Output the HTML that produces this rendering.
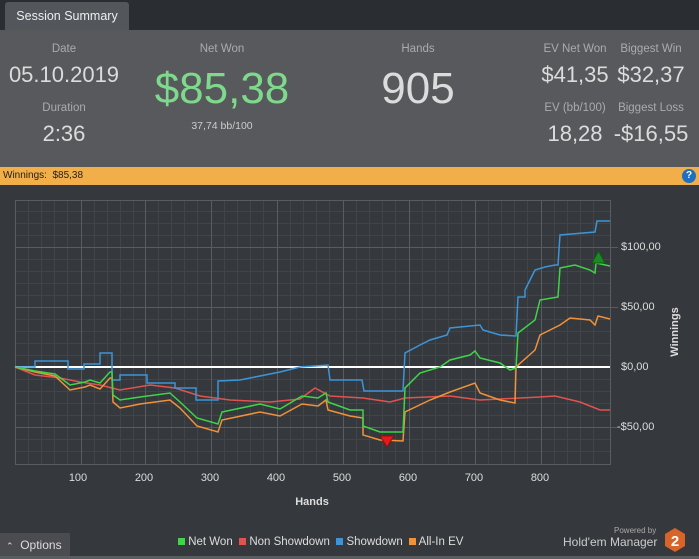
<!DOCTYPE html>
<html><head><meta charset="utf-8"><style>
*{margin:0;padding:0;box-sizing:border-box}
body{width:699px;height:559px;background:#35383c;font-family:"Liberation Sans",sans-serif;position:relative;overflow:hidden}
.t{position:absolute;text-align:center;color:#a9abad;white-space:nowrap}
.v{position:absolute;text-align:center;color:#dcdcdc;white-space:nowrap}
</style></head><body>
<div style="position:absolute;left:0;top:0;width:699px;height:30px;background:#2a2d31"></div>
<div style="position:absolute;left:5px;top:2px;width:124px;height:28px;background:#53575b;border-radius:3px 3px 0 0;color:#eee;font-size:12.5px;line-height:28px;text-align:center">Session Summary</div>
<div style="position:absolute;left:0;top:30px;width:699px;height:137px;background:#57595c"></div>
<div class="t" style="left:14px;width:100px;top:43px;font-size:11.5px">Date</div>
<div class="v" style="left:0;width:128px;top:62px;font-size:22px">05.10.2019</div>
<div class="t" style="left:14px;width:100px;top:102px;font-size:11.5px">Duration</div>
<div class="v" style="left:14px;width:100px;top:121px;font-size:22px">2:36</div>
<div class="t" style="left:172px;width:100px;top:43px;font-size:11.5px">Net Won</div>
<div class="v" style="left:122px;width:200px;top:64px;font-size:44px;color:#7fd98c">$85,38</div>
<div class="v" style="left:172px;width:100px;top:120px;font-size:10.5px;color:#ccc">37,74 bb/100</div>
<div class="t" style="left:368px;width:100px;top:43px;font-size:11.5px">Hands</div>
<div class="v" style="left:318px;width:200px;top:64px;font-size:44px">905</div>
<div class="t" style="left:525px;width:100px;top:43px;font-size:11.5px">EV Net Won</div>
<div class="v" style="left:525px;width:100px;top:62px;font-size:22px">$41,35</div>
<div class="t" style="left:601px;width:100px;top:43px;font-size:11.5px">Biggest Win</div>
<div class="v" style="left:601px;width:100px;top:62px;font-size:22px">$32,37</div>
<div class="t" style="left:525px;width:100px;top:102px;font-size:11.5px">EV (bb/100)</div>
<div class="v" style="left:525px;width:100px;top:121px;font-size:22px">18,28</div>
<div class="t" style="left:601px;width:100px;top:102px;font-size:11.5px">Biggest Loss</div>
<div class="v" style="left:601px;width:100px;top:121px;font-size:22px">-$16,55</div>
<div style="position:absolute;left:0;top:167px;width:699px;height:18px;background:#f2ae48;font-size:10px;line-height:18px;padding-left:3px;color:#222">Winnings:&nbsp; $85,38</div>
<div style="position:absolute;left:682px;top:169px;width:14px;height:14px;border-radius:50%;background:#1e6fc0;color:#fff;font-size:10px;font-weight:bold;text-align:center;line-height:14px">?</div>
<svg style="position:absolute;left:0;top:0" width="699" height="559">
<g stroke="#41454a" stroke-width="1">
<path d="M28.5 200V464M41.5 200V464M54.5 200V464M67.5 200V464M94.5 200V464M107.5 200V464M120.5 200V464M133.5 200V464M158.5 200V464M171.5 200V464M184.5 200V464M197.5 200V464M224.5 200V464M237.5 200V464M250.5 200V464M263.5 200V464M290.5 200V464M303.5 200V464M316.5 200V464M329.5 200V464M356.5 200V464M369.5 200V464M382.5 200V464M395.5 200V464M422.5 200V464M435.5 200V464M448.5 200V464M461.5 200V464M488.5 200V464M501.5 200V464M514.5 200V464M527.5 200V464M554.5 200V464M567.5 200V464M580.5 200V464M593.5 200V464"/>
<path d="M15 211.5H610M15 223.5H610M15 235.5H610M15 259.5H610M15 271.5H610M15 283.5H610M15 295.5H610M15 319.5H610M15 331.5H610M15 343.5H610M15 355.5H610M15 379.5H610M15 391.5H610M15 403.5H610M15 415.5H610M15 439.5H610M15 451.5H610"/>
</g>
<g stroke="#595d61" stroke-width="1" fill="none">
<rect x="15.5" y="200.5" width="595" height="264"/>
<path d="M81.5 200V464M145.5 200V464M211.5 200V464M277.5 200V464M343.5 200V464M409.5 200V464M475.5 200V464M541.5 200V464M15 247.5H618M15 307.5H618M15 427.5H618"/>
</g>
<line x1="15" y1="367" x2="610" y2="367" stroke="#fff" stroke-width="2"/>
<g fill="none" stroke-width="1.5">
<polyline stroke="#e0534f" points="15,367 35,375 60,378 80,382 100,385 120,390 150,385 175,388 200,396 230,400 270,402 300,399 315,388 330,396 363,398 390,402 405,398 450,396 480,400 500,399 540,397 555,396 580,402 600,410 610,410"/>
<polyline stroke="#3d95d8" points="15,367 35,367 35,361 68,361 68,369 84,369 84,364 100,364 100,353 112,353 112,380 120,380 120,375 147,375 147,383 175,383 175,388 196,388 196,400 218,400 218,381 240,380 250,378 280,372 300,367 328,365 330,380 362,380 364,391 403,391 405,353 420,345 430,340 447,335 450,328 480,325 483,330 500,335 516,336 518,297 525,297 525,290 530,280 535,270 545,267 555,265 558,265 560,235 595,232 597,221 610,221"/>
<polyline stroke="#f0923a" points="15,367 35,372 55,376 70,390 85,387 90,385 100,389 110,378 112,378 113,402 120,408 140,404 170,400 180,408 197,426 218,432 222,420 260,412 280,416 302,404 318,406 326,400 328,410 350,416 363,418 363,435 380,440 403,441 405,412 430,400 450,392 475,383 480,393 500,400 515,403 516,367 535,350 540,335 560,325 570,318 590,320 595,325 598,316 610,319"/>
<polyline stroke="#3fd44a" points="15,367 35,371 55,374 70,385 85,382 90,380 100,383 110,372 112,372 113,395 120,400 140,397 170,393 180,402 197,418 218,424 222,412 260,404 280,409 302,396 318,398 326,393 328,402 350,410 363,410 363,426 380,432 403,432 405,388 420,373 440,367 450,360 470,355 475,351 480,358 500,363 510,370 516,368 518,333 535,320 540,300 558,297 560,268 575,265 590,270 595,273 596,263 610,266"/>
</g>
<path d="M380 436L394 436L387 447Z" fill="#e81818" stroke="#8a1010"/>
<path d="M592 263L605 263L598.5 251Z" fill="#1c8a24" stroke="#0e5a14"/>
<g fill="#ddd" font-size="11" font-family="Liberation Sans,sans-serif">
<text x="621" y="250">$100,00</text><text x="621" y="310">$50,00</text><text x="621" y="370">$0,00</text><text x="617" y="430">-$50,00</text>
<g text-anchor="middle"><text x="78" y="481">100</text><text x="144" y="481">200</text><text x="210" y="481">300</text><text x="276" y="481">400</text><text x="342" y="481">500</text><text x="408" y="481">600</text><text x="474" y="481">700</text><text x="540" y="481">800</text></g>
<text x="312" y="505" font-size="11" font-weight="bold" text-anchor="middle">Hands</text>
<text x="0" y="0" font-size="11" font-weight="bold" text-anchor="middle" transform="translate(678,332) rotate(-90)">Winnings</text>
</g>
</svg>
<div style="position:absolute;left:0;top:533px;width:70px;height:24px;background:#4a4c4f;color:#ddd;font-size:12px;line-height:24px;padding-left:6px"><span style="font-size:9px">&#8963;</span>&nbsp;&nbsp;Options</div>
<div style="position:absolute;left:0;top:556px;width:699px;height:3px;background:#5a5d60"></div>
<div style="position:absolute;left:178px;top:536px;font-size:11.5px;color:#ddd;white-space:nowrap"><span style="display:inline-block;width:7px;height:7px;background:#3fd44a"></span> Net Won&nbsp; <span style="display:inline-block;width:7px;height:7px;background:#e0534f"></span> Non Showdown&nbsp; <span style="display:inline-block;width:7px;height:7px;background:#3d95d8"></span> Showdown&nbsp; <span style="display:inline-block;width:7px;height:7px;background:#f0923a"></span> All-In EV</div>
<div style="position:absolute;left:614px;top:526px;font-size:8px;color:#aaa">Powered by</div>
<div style="position:absolute;left:563px;top:535px;font-size:12px;color:#ccc">Hold'em Manager</div>
<svg style="position:absolute;left:664px;top:527px" width="22" height="26"><path d="M11 1L21 7V19L11 25L1 19V7Z" fill="#d9642a"/><text x="11" y="19" fill="#fff" font-size="15" font-weight="bold" text-anchor="middle" font-family="Liberation Sans,sans-serif">2</text></svg>
</body></html>
